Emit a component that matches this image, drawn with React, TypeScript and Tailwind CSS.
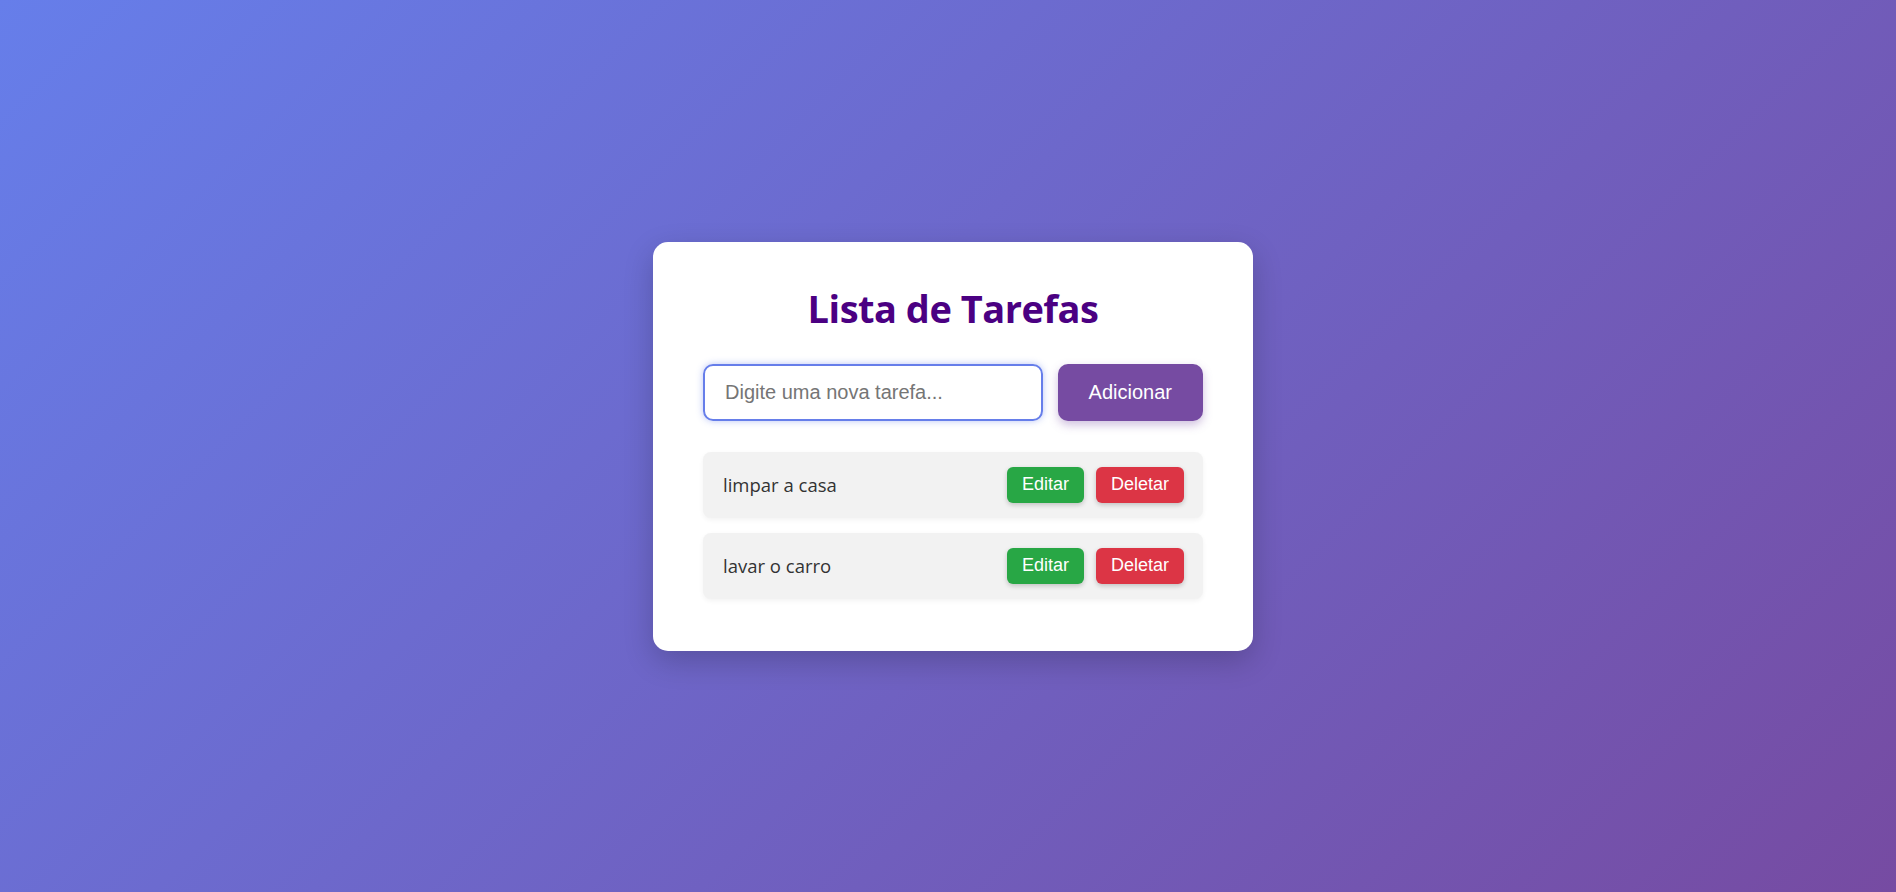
import React from "react";

const tasks = ["limpar a casa", "lavar o carro"];

export default function App() {
  return (
    <div className="min-h-screen w-full flex items-center justify-center pl-[10px] bg-[linear-gradient(135deg,#667eea_0%,#764ba2_100%)]">
      <div className="w-[600px] bg-white rounded-[15px] px-[50px] pt-[42px] pb-[52px] shadow-[0_10px_30px_rgba(0,0,0,0.2)]">
        <h1 className="text-center text-[38px] leading-[48px] font-bold tracking-[-0.5px] text-[#4b0082] mb-[32px] font-['Open_Sans',sans-serif]">
          Lista de Tarefas
        </h1>
        <div className="flex gap-[15px]">
          <input
            type="text"
            placeholder="Digite uma nova tarefa..."
            className="flex-1 min-w-0 h-[57px] border-2 border-[#667eea] rounded-[10px] px-[20px] text-[20px] font-['Liberation_Sans',Arial,sans-serif] placeholder:text-[#757575] outline-none shadow-[0_0_7px_rgba(102,126,234,0.45)]"
          />
          <button className="h-[57px] px-[31px] rounded-[10px] bg-[#764ba2] text-white text-[20px] font-['Liberation_Sans',Arial,sans-serif] shadow-[0_4px_10px_rgba(118,75,162,0.35)]">
            Adicionar
          </button>
        </div>
        <ul className="mt-[31px] flex flex-col gap-[15px]">
          {tasks.map((t) => (
            <li
              key={t}
              className="h-[66px] flex items-center justify-between bg-[#f2f2f2] rounded-[8px] pl-[20px] pr-[19px] shadow-[0_2px_5px_rgba(0,0,0,0.05)]"
            >
              <span className="text-[18.5px] text-[#333] font-['Open_Sans',sans-serif]">{t}</span>
              <div className="flex gap-[12px]">
                <button className="h-[36px] px-[15px] rounded-[6px] bg-[#28a745] text-white text-[18px] font-['Liberation_Sans',Arial,sans-serif] shadow-[0_2px_5px_rgba(0,0,0,0.2)]">
                  Editar
                </button>
                <button className="h-[36px] px-[15px] rounded-[6px] bg-[#dc3545] text-white text-[18px] font-['Liberation_Sans',Arial,sans-serif] shadow-[0_2px_5px_rgba(0,0,0,0.2)]">
                  Deletar
                </button>
              </div>
            </li>
          ))}
        </ul>
      </div>
    </div>
  );
}
